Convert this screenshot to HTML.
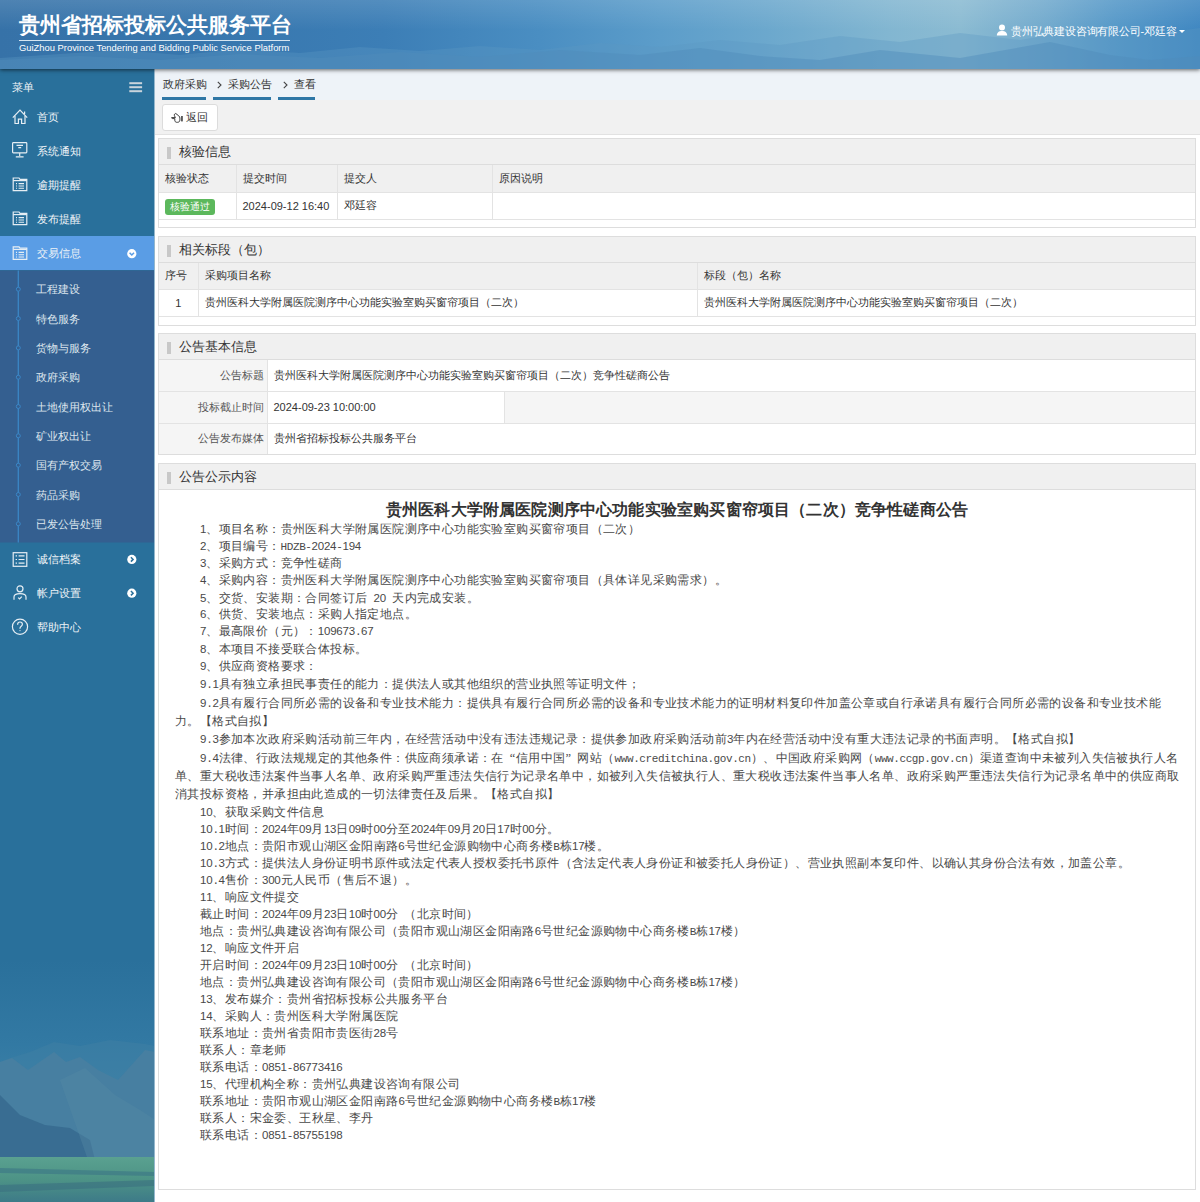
<!DOCTYPE html>
<html><head><meta charset="utf-8">
<style>
*{box-sizing:border-box;margin:0;padding:0}
html,body{width:1200px;height:1202px;overflow:hidden;background:#fff}
body{position:relative;font-family:"Liberation Sans",sans-serif;color:#333;font-size:11px}
.abs{position:absolute}
#hdr{left:0;top:0;width:1200px;height:69px;overflow:hidden;background:linear-gradient(90deg,#3672a8 0%,#3877ae 18%,#3c7eb6 32%,#4a8ec2 45%,#5c9dca 55%,#6ca8cd 64%,#82b6d1 74%,#8bbbd2 80%,#72aacd 87%,#5598c8 93%,#3f87c1 100%);box-shadow:0 1px 4px rgba(0,0,0,.6);z-index:5}
#side{left:0;top:69px;width:154px;box-shadow:1px 0 0 rgba(41,112,155,0.5);height:1133px;background:#29709b;overflow:hidden}
#crumb{left:155px;top:69px;width:1045px;height:31px;background:#eef3f8}
#tool{left:155px;top:100px;width:1045px;height:35px;background:#f1f1f1;border-bottom:1px solid #e2e2e2}
.panel{position:absolute;left:158px;width:1038px;border:1px solid #ddd;background:#fff;overflow:hidden}
.ph{height:26px;background:#f0f0f0;border-bottom:1px solid #ddd;position:relative;font-size:13px;line-height:26px;padding-left:20px;color:#333}
.ph:before{content:"";position:absolute;left:8px;top:8px;width:4px;height:12px;background:#c8c8c8}
table{border-collapse:collapse;width:100%}
td,th{border:1px solid #e3e3e3;font-weight:normal;text-align:left;height:27px;padding:0 6px;font-size:11px;color:#333;white-space:nowrap}
th{background:#f0f0f0}
.panel table{margin-left:0}
.t3 th{background:#f5f5f5;text-align:right;height:32px;padding-right:3px;color:#555}
.t3 td{height:32px}
.t3 tr:last-child th,.t3 tr:last-child td{border-bottom:0;height:31px}
.t3 tr:first-child th,.t3 tr:first-child td{border-top:0;height:31px}
.t1 tr:first-child th,.t2 tr:first-child th{border-top:0}
.t2 tr:first-child th{height:26px}
.panel td:first-child,.panel th:first-child{border-left:0}
.panel td:last-child,.panel th:last-child{border-right:0}
.badge{display:inline-block;position:relative;top:1px;background:#5cb85c;color:#fff;border-radius:3px;height:16px;line-height:16px;padding:0 5px;font-size:10px}
.ln{position:absolute;white-space:nowrap;font-family:"Liberation Serif",serif;font-size:12.4px;letter-spacing:0.4px;text-spacing-trim:space-all;line-height:16px;height:16px;color:#484848}
.q{display:inline-block;width:12px;font-family:"Liberation Serif",serif}
.ql{text-align:right}
.c{display:inline-block;width:6.2px;text-align:center;letter-spacing:0;font-family:"Liberation Mono",monospace;font-size:11px}
.d{font-family:"Liberation Sans",sans-serif;font-size:11.5px}
.ttl{position:absolute;left:158px;width:1038px;top:500px;text-align:center;font-family:"Liberation Serif",serif;font-weight:bold;font-size:16px;line-height:20px;color:#333;letter-spacing:0.17px}
.sl{position:absolute;font-size:11px;line-height:16px;color:#eef3f7;white-space:nowrap}
.ss{color:#dde6ee}
.bc{position:absolute;top:0;height:31px;border-bottom:3px solid #2e77a6;white-space:nowrap}
.bt{position:absolute;top:7px;font-size:11px;line-height:16px;color:#333}
.bcs{position:absolute;top:1px;font-size:11px;line-height:22px;color:#555}
.btn{background:#fff;border:1px solid #dcdcdc;border-radius:3px}
</style></head><body>
<div id="hdr" class="abs">
 <svg class="abs" style="left:0;top:0" width="1200" height="69">
  <defs>
   <linearGradient id="hg1" x1="0" y1="0" x2="0" y2="1"><stop offset="0" stop-color="#ffffff" stop-opacity="0.12"/><stop offset="1" stop-color="#ffffff" stop-opacity="0"/></linearGradient>
  </defs>
  <path d="M0 58 L60 54 L120 50 L180 55 L240 49 L300 53 L360 47 L420 51 L480 46 L540 50 L600 43 L660 47 L720 40 L780 45 L840 36 L900 42 L960 33 L1020 40 L1080 30 L1140 36 L1200 28 L1200 69 L0 69 Z" fill="#5b97c2" opacity="0.35"/><path d="M0 69 L0 60 L80 56 L160 60 L240 54 L320 58 L400 52 L480 57 L560 50 L640 55 L700 48 L760 56 L820 60 L880 50 L960 58 L1050 42 L1110 55 L1150 60 L1200 56 L1200 69 Z" fill="#4f8cbb" opacity="0.45"/><rect x="0" y="0" width="1200" height="30" fill="url(#hg1)"/>
 </svg>
 <div class="abs" style="left:19px;top:11px;font-size:21px;font-weight:900;color:#fff;line-height:28px;white-space:nowrap">贵州省招标投标公共服务平台</div>
 <div class="abs" style="left:19px;top:40px;width:271px;height:1px;background:#d6e6f2"></div>
 <div class="abs" style="left:19px;top:42px;font-size:9.4px;color:#fff;line-height:12px;white-space:nowrap">GuiZhou Province Tendering and Bidding Public Service Platform</div>
 <svg class="abs" style="left:996px;top:24px" width="12" height="12" viewBox="0 0 12 12"><circle cx="6" cy="3.6" r="3" fill="#fff"/><path d="M0.8 11.5 C1 8.2 3 7 6 7 C9 7 11 8.2 11.2 11.5 Z" fill="#fff"/></svg>
 <div class="abs" style="left:1011px;top:23px;font-size:11px;color:#fff;line-height:16px;white-space:nowrap;letter-spacing:-0.2px">贵州弘典建设咨询有限公司-邓廷容</div>
 <div class="abs" style="left:1179px;top:30px;width:0;height:0;border-left:3px solid transparent;border-right:3px solid transparent;border-top:3.5px solid #fff"></div>
</div>
<div id="side" class="abs">
<svg class="abs" style="left:0;top:0" width="155" height="1133"><defs><linearGradient id="sg" x1="0" y1="0" x2="0" y2="1"><stop offset="0" stop-color="#2a709b"/><stop offset="0.35" stop-color="#3279a3"/><stop offset="0.5" stop-color="#3a7fa6"/><stop offset="1" stop-color="#3a78a0"/></linearGradient><linearGradient id="mg" x1="0" y1="0" x2="0" y2="1"><stop offset="0" stop-color="#4f8aa6"/><stop offset="1" stop-color="#3b6f83"/></linearGradient><linearGradient id="fg" x1="0" y1="0" x2="0" y2="1"><stop offset="0" stop-color="#5aa190"/><stop offset="0.5" stop-color="#4d9386"/><stop offset="1" stop-color="#3d7a88"/></linearGradient></defs><rect x="0" y="167" width="155" height="34" fill="#5a9de5"/><rect x="0" y="201.5" width="155" height="272" fill="#345f90"/><rect x="0" y="891" width="155" height="242" fill="url(#sg)"/><path d="M0 993 L10 989 L30 983 L54 973 L80 977 L110 971 L145 975 L155 977 L155 1133 L0 1133 Z" fill="#3f7fa3" opacity="0.5"/><path d="M0 993 L12 989 L28 1001 L54 983 L66 993 L80 988 L98 1001 L118 1011 L145 981 L155 983 L155 1133 L0 1133 Z" fill="#477fa1"/><path d="M0 1026 L20 1046 L45 1056 L70 1059 L90 1071 L95 1091 L0 1091 Z" fill="#36698f" opacity="0.8"/><path d="M60 1011 L85 999 L115 1026 L140 1041 L155 1051 L155 1091 L88 1091 Z" fill="#5689a5" opacity="0.4"/><rect x="0" y="1088" width="155" height="45" fill="url(#fg)"/><path d="M0 1099 L155 1103 L155 1107 L0 1104 Z" fill="#3a7585" opacity="0.6"/><path d="M0 1116 L155 1111 L155 1117 L0 1123 Z" fill="#3a6f80" opacity="0.6"/><line x1="18.3" y1="201.5" x2="18.3" y2="473.5" stroke="#3b86c6" stroke-width="1.3"/>
<g transform="translate(0,40.0)" fill="none" stroke="#e6eef4" stroke-width="1.2"><path d="M12.8 8.6 L20 1.2 L27.2 8.6"/><path d="M15 6.8 V14.5 H18.4 V10.2 H21.6 V14.5 H25 V6.8"/><path d="M24.6 2.4 V5"/></g>
<g transform="translate(0,73.0)" fill="none" stroke="#e6eef4" stroke-width="1.2"><rect x="12.6" y="0.6" width="14.2" height="10.2" rx="0.8"/><path d="M16.5 3.4 H23 M18.3 5.6 H21.2 M19.7 11 V14 M15.8 14.8 H23.6"/></g>
<g transform="translate(0,108.0)" fill="none" stroke="#e6eef4" stroke-width="1.2"><path d="M13.2 3 V1 H19 L20 2.4 H26.8 V13.6 H13.2 Z"/><path d="M13.2 3.6 H26.8"/><path d="M16 6.6 H17 M18.6 6.6 H24 M16 9 H17 M18.6 9 H24 M16 11.2 H17 M18.6 11.2 H24" stroke-width="1.1"/></g>
<g transform="translate(0,142.0)" fill="none" stroke="#e6eef4" stroke-width="1.2"><path d="M13.2 3 V1 H19 L20 2.4 H26.8 V13.6 H13.2 Z"/><path d="M13.2 3.6 H26.8"/><path d="M16 6.6 H17 M18.6 6.6 H24 M16 9 H17 M18.6 9 H24 M16 11.2 H17 M18.6 11.2 H24" stroke-width="1.1"/></g>
<g transform="translate(0,176.8)" fill="none" stroke="#e6eef4" stroke-width="1.2"><path d="M13.2 3 V1 H19 L20 2.4 H26.8 V13.6 H13.2 Z"/><path d="M13.2 3.6 H26.8"/><path d="M16 6.6 H17 M18.6 6.6 H24 M16 9 H17 M18.6 9 H24 M16 11.2 H17 M18.6 11.2 H24" stroke-width="1.1"/></g>
<g transform="translate(0,482.9)" fill="none" stroke="#e6eef4" stroke-width="1.2"><rect x="13.2" y="0.8" width="13.6" height="13.6"/><path d="M15.6 4 H17 M18.6 4 H24.5 M15.6 7.6 H17 M18.6 7.6 H24.5 M15.6 11.2 H17 M18.6 11.2 H24.5" stroke-width="1.1"/></g>
<g transform="translate(0,516.2)" fill="none" stroke="#e6eef4" stroke-width="1.2"><circle cx="20" cy="3.6" r="3"/><path d="M14 14.5 V11.8 C14 9.5 16 8.4 20 8.4 C24 8.4 26 9.5 26 11.8 V14.5"/><path d="M18.2 12.4 L19.6 13.8 L21.8 11.4"/></g>
<g transform="translate(0,557.8)" fill="none" stroke="#e6eef4" stroke-width="1.2"><circle cx="20" cy="0" r="7.6"/><path d="M17.6 -2 C17.6 -4 18.6 -4.8 20 -4.8 C21.5 -4.8 22.4 -3.9 22.4 -2.5 C22.4 -0.6 20 -0.6 20 1.4 V2"/><circle cx="20" cy="3.8" r="0.6" fill="#e6eef4" stroke="none"/></g>
<g transform="translate(131.8,184.7)"><circle r="4.6" fill="#fff"/><path d="M-2.2 -0.9 L0 1.3 L2.2 -0.9" fill="none" stroke="#5a9de5" stroke-width="1.5"/></g>
<g transform="translate(131.8,490.4)"><circle r="4.6" fill="#fff"/><path d="M-0.9 -2.2 L1.3 0 L-0.9 2.2" fill="none" stroke="#2a709b" stroke-width="1.5"/></g>
<g transform="translate(131.8,524.2)"><circle r="4.6" fill="#fff"/><path d="M-0.9 -2.2 L1.3 0 L-0.9 2.2" fill="none" stroke="#2a709b" stroke-width="1.5"/></g>
<circle cx="18.3" cy="220.2" r="2" fill="#345f90" stroke="#3b86c6" stroke-width="1"/>
<circle cx="18.3" cy="249.5" r="2" fill="#345f90" stroke="#3b86c6" stroke-width="1"/>
<circle cx="18.3" cy="278.9" r="2" fill="#345f90" stroke="#3b86c6" stroke-width="1"/>
<circle cx="18.3" cy="308.2" r="2" fill="#345f90" stroke="#3b86c6" stroke-width="1"/>
<circle cx="18.3" cy="337.5" r="2" fill="#345f90" stroke="#3b86c6" stroke-width="1"/>
<circle cx="18.3" cy="366.8" r="2" fill="#345f90" stroke="#3b86c6" stroke-width="1"/>
<circle cx="18.3" cy="396.2" r="2" fill="#345f90" stroke="#3b86c6" stroke-width="1"/>
<circle cx="18.3" cy="425.5" r="2" fill="#345f90" stroke="#3b86c6" stroke-width="1"/>
<circle cx="18.3" cy="454.8" r="2" fill="#345f90" stroke="#3b86c6" stroke-width="1"/>
<g fill="#c9d4dc"><rect x="129.3" y="13.2" width="12.8" height="2"/><rect x="129.3" y="17.2" width="12.8" height="2"/><rect x="129.3" y="21.2" width="12.8" height="2"/></g>
</svg>
<div class="sl" style="left:11.5px;top:9.5px">菜单</div>
<div class="sl" style="left:36.5px;top:39.5px">首页</div>
<div class="sl" style="left:36.5px;top:73.5px">系统通知</div>
<div class="sl" style="left:36.5px;top:107.5px">逾期提醒</div>
<div class="sl" style="left:36.5px;top:141.5px">发布提醒</div>
<div class="sl" style="left:36.5px;top:176.3px">交易信息</div>
<div class="sl" style="left:36.5px;top:482.4px">诚信档案</div>
<div class="sl" style="left:36.5px;top:516.2px">帐户设置</div>
<div class="sl" style="left:36.5px;top:549.8px">帮助中心</div>
<div class="sl ss" style="left:35.8px;top:212.2px">工程建设</div>
<div class="sl ss" style="left:35.8px;top:241.5px">特色服务</div>
<div class="sl ss" style="left:35.8px;top:270.9px">货物与服务</div>
<div class="sl ss" style="left:35.8px;top:300.2px">政府采购</div>
<div class="sl ss" style="left:35.8px;top:329.5px">土地使用权出让</div>
<div class="sl ss" style="left:35.8px;top:358.8px">矿业权出让</div>
<div class="sl ss" style="left:35.8px;top:388.2px">国有产权交易</div>
<div class="sl ss" style="left:35.8px;top:417.5px">药品采购</div>
<div class="sl ss" style="left:35.8px;top:446.8px">已发公告处理</div>
</div>
<div id="crumb" class="abs">
 <div class="bc" style="left:7px;width:44px"><span class="bt" style="left:0.5px">政府采购</span></div>
 <div class="bc" style="left:57.7px;width:58.5px"><svg class="abs" style="left:4px;top:12px" width="5" height="8" viewBox="0 0 5 8"><path d="M0.8 0.8 L4 4 L0.8 7.2" fill="none" stroke="#444" stroke-width="1.1"/></svg><span class="bt" style="left:15px">采购公告</span></div>
 <div class="bc" style="left:123px;width:37.4px"><svg class="abs" style="left:4.5px;top:12px" width="5" height="8" viewBox="0 0 5 8"><path d="M0.8 0.8 L4 4 L0.8 7.2" fill="none" stroke="#444" stroke-width="1.1"/></svg><span class="bt" style="left:15.5px">查看</span></div>
</div>
</div>
<div id="tool" class="abs">
 <div class="abs btn" style="left:7px;top:4px;width:56px;height:27px">
  <svg class="abs" style="left:8px;top:6.5px" width="13" height="12" viewBox="0 0 13 12"><path d="M0.6 5.6 H4.4 L3.4 3.6 C3 2.6 3.9 1.2 4.9 1.6 L7.8 3.9 C8.5 4.5 8.9 5.2 8.9 6.1 V7.9 C8.9 9.3 8 10.3 6.6 10.3 H5.7 C4.5 10.3 3.8 9.4 3.8 8.2 V6.6 H1.6 C1 6.6 0.6 6.2 0.6 5.6 Z" fill="none" stroke="#3a3a3a" stroke-width="1" stroke-linejoin="round"/><rect x="10.2" y="4" width="1.5" height="5.4" fill="#333"/></svg>
  <div class="abs" style="left:23px;top:4px;font-size:11px;line-height:16px;color:#333">返回</div>
 </div>
</div>
<div class="panel" style="top:138px;height:90px">
 <div class="ph">核验信息</div>
 <table class="t1"><colgroup><col style="width:77px"><col style="width:101px"><col style="width:155px"><col></colgroup>
 <tr><th>核验状态</th><th>提交时间</th><th>提交人</th><th>原因说明</th></tr>
 <tr><td><span class="badge">核验通过</span></td><td>2024-09-12 16:40</td><td>邓廷容</td><td></td></tr>
 </table>
</div>
<div class="panel" style="top:236px;height:90px">
 <div class="ph" style="height:26px">相关标段（包）</div>
 <table class="t2"><colgroup><col style="width:39px"><col style="width:499px"><col></colgroup>
 <tr><th>序号</th><th>采购项目名称</th><th>标段（包）名称</th></tr>
 <tr><td style="text-align:center">1</td><td>贵州医科大学附属医院测序中心功能实验室购买窗帘项目（二次）</td><td>贵州医科大学附属医院测序中心功能实验室购买窗帘项目（二次）</td></tr>
 </table>
</div>
<div class="panel" style="top:333px;height:122px">
 <div class="ph">公告基本信息</div>
 <table class="t3"><colgroup><col style="width:108px"><col style="width:237px"><col></colgroup>
 <tr><th>公告标题</th><td colspan="2">贵州医科大学附属医院测序中心功能实验室购买窗帘项目（二次）竞争性磋商公告</td></tr>
 <tr><th>投标截止时间</th><td>2024-09-23 10:00:00</td><th></th></tr>
 <tr><th>公告发布媒体</th><td colspan="2">贵州省招标投标公共服务平台</td></tr>
 </table>
</div>
<div class="panel" style="top:463px;height:727px">
 <div class="ph">公告公示内容</div>
</div>
<div class="ttl">贵州医科大学附属医院测序中心功能实验室购买窗帘项目（二次）竞争性磋商公告</div>
<div class="ln" style="top:521.4px;left:200px"><span class="c d">1</span>、项目名称：贵州医科大学附属医院测序中心功能实验室购买窗帘项目（二次）</div>
<div class="ln" style="top:538.2px;left:200px"><span class="c d">2</span>、项目编号：<span class="c">H</span><span class="c">D</span><span class="c">Z</span><span class="c">B</span><span class="c">-</span><span class="c d">2</span><span class="c d">0</span><span class="c d">2</span><span class="c d">4</span><span class="c">-</span><span class="c d">1</span><span class="c d">9</span><span class="c d">4</span></div>
<div class="ln" style="top:555.1px;left:200px"><span class="c d">3</span>、采购方式：竞争性磋商</div>
<div class="ln" style="top:572.0px;left:200px"><span class="c d">4</span>、采购内容：贵州医科大学附属医院测序中心功能实验室购买窗帘项目（具体详见采购需求）。</div>
<div class="ln" style="top:589.5px;left:200px"><span class="c d">5</span>、交货、安装期：合同签订后<span class="c">&nbsp;</span><span class="c d">2</span><span class="c d">0</span><span class="c">&nbsp;</span>天内完成安装。</div>
<div class="ln" style="top:606.4px;left:200px"><span class="c d">6</span>、供货、安装地点：采购人指定地点。</div>
<div class="ln" style="top:623.2px;left:200px"><span class="c d">7</span>、最高限价（元）：<span class="c d">1</span><span class="c d">0</span><span class="c d">9</span><span class="c d">6</span><span class="c d">7</span><span class="c d">3</span><span class="c">.</span><span class="c d">6</span><span class="c d">7</span></div>
<div class="ln" style="top:640.5px;left:200px"><span class="c d">8</span>、本项目不接受联合体投标。</div>
<div class="ln" style="top:657.8px;left:200px"><span class="c d">9</span>、供应商资格要求：</div>
<div class="ln" style="top:676.2px;left:200px"><span class="c d">9</span><span class="c">.</span><span class="c d">1</span>具有独立承担民事责任的能力：提供法人或其他组织的营业执照等证明文件；</div>
<div class="ln" style="top:694.5px;left:200px"><span class="c d">9</span><span class="c">.</span><span class="c d">2</span>具有履行合同所必需的设备和专业技术能力：提供具有履行合同所必需的设备和专业技术能力的证明材料复印件加盖公章或自行承诺具有履行合同所必需的设备和专业技术能</div>
<div class="ln" style="top:712.8px;left:175px">力。【格式自拟】</div>
<div class="ln" style="top:731.2px;left:200px"><span class="c d">9</span><span class="c">.</span><span class="c d">3</span>参加本次政府采购活动前三年内，在经营活动中没有违法违规记录：提供参加政府采购活动前<span class="c d">3</span>年内在经营活动中没有重大违法记录的书面声明。【格式自拟】</div>
<div class="ln" style="top:749.5px;left:200px"><span class="c d">9</span><span class="c">.</span><span class="c d">4</span>法律、行政法规规定的其他条件：供应商须承诺：在<span class="q ql">“</span>信用中国<span class="q qr">”</span>网站（<span class="c">w</span><span class="c">w</span><span class="c">w</span><span class="c">.</span><span class="c">c</span><span class="c">r</span><span class="c">e</span><span class="c">d</span><span class="c">i</span><span class="c">t</span><span class="c">c</span><span class="c">h</span><span class="c">i</span><span class="c">n</span><span class="c">a</span><span class="c">.</span><span class="c">g</span><span class="c">o</span><span class="c">v</span><span class="c">.</span><span class="c">c</span><span class="c">n</span>）、中国政府采购网（<span class="c">w</span><span class="c">w</span><span class="c">w</span><span class="c">.</span><span class="c">c</span><span class="c">c</span><span class="c">g</span><span class="c">p</span><span class="c">.</span><span class="c">g</span><span class="c">o</span><span class="c">v</span><span class="c">.</span><span class="c">c</span><span class="c">n</span>）渠道查询中未被列入失信被执行人名</div>
<div class="ln" style="top:767.8px;left:175px">单、重大税收违法案件当事人名单、政府采购严重违法失信行为记录名单中，如被列入失信被执行人、重大税收违法案件当事人名单、政府采购严重违法失信行为记录名单中的供应商取</div>
<div class="ln" style="top:786.2px;left:175px">消其投标资格，并承担由此造成的一切法律责任及后果。【格式自拟】</div>
<div class="ln" style="top:803.9px;left:200px"><span class="c d">1</span><span class="c d">0</span>、获取采购文件信息</div>
<div class="ln" style="top:820.9px;left:200px"><span class="c d">1</span><span class="c d">0</span><span class="c">.</span><span class="c d">1</span>时间：<span class="c d">2</span><span class="c d">0</span><span class="c d">2</span><span class="c d">4</span>年<span class="c d">0</span><span class="c d">9</span>月<span class="c d">1</span><span class="c d">3</span>日<span class="c d">0</span><span class="c d">9</span>时<span class="c d">0</span><span class="c d">0</span>分至<span class="c d">2</span><span class="c d">0</span><span class="c d">2</span><span class="c d">4</span>年<span class="c d">0</span><span class="c d">9</span>月<span class="c d">2</span><span class="c d">0</span>日<span class="c d">1</span><span class="c d">7</span>时<span class="c d">0</span><span class="c d">0</span>分。</div>
<div class="ln" style="top:837.9px;left:200px"><span class="c d">1</span><span class="c d">0</span><span class="c">.</span><span class="c d">2</span>地点：贵阳市观山湖区金阳南路<span class="c d">6</span>号世纪金源购物中心商务楼<span class="c">B</span>栋<span class="c d">1</span><span class="c d">7</span>楼。</div>
<div class="ln" style="top:854.9px;left:200px"><span class="c d">1</span><span class="c d">0</span><span class="c">.</span><span class="c d">3</span>方式：提供法人身份证明书原件或法定代表人授权委托书原件（含法定代表人身份证和被委托人身份证）、营业执照副本复印件、以确认其身份合法有效，加盖公章。</div>
<div class="ln" style="top:871.9px;left:200px"><span class="c d">1</span><span class="c d">0</span><span class="c">.</span><span class="c d">4</span>售价：<span class="c d">3</span><span class="c d">0</span><span class="c d">0</span>元人民币（售后不退）。</div>
<div class="ln" style="top:888.9px;left:200px"><span class="c d">1</span><span class="c d">1</span>、响应文件提交</div>
<div class="ln" style="top:905.9px;left:200px">截止时间：<span class="c d">2</span><span class="c d">0</span><span class="c d">2</span><span class="c d">4</span>年<span class="c d">0</span><span class="c d">9</span>月<span class="c d">2</span><span class="c d">3</span>日<span class="c d">1</span><span class="c d">0</span>时<span class="c d">0</span><span class="c d">0</span>分<span class="c">&nbsp;</span>（北京时间）</div>
<div class="ln" style="top:922.9px;left:200px">地点：贵州弘典建设咨询有限公司（贵阳市观山湖区金阳南路<span class="c d">6</span>号世纪金源购物中心商务楼<span class="c">B</span>栋<span class="c d">1</span><span class="c d">7</span>楼）</div>
<div class="ln" style="top:939.9px;left:200px"><span class="c d">1</span><span class="c d">2</span>、响应文件开启</div>
<div class="ln" style="top:956.9px;left:200px">开启时间：<span class="c d">2</span><span class="c d">0</span><span class="c d">2</span><span class="c d">4</span>年<span class="c d">0</span><span class="c d">9</span>月<span class="c d">2</span><span class="c d">3</span>日<span class="c d">1</span><span class="c d">0</span>时<span class="c d">0</span><span class="c d">0</span>分<span class="c">&nbsp;</span>（北京时间）</div>
<div class="ln" style="top:973.9px;left:200px">地点：贵州弘典建设咨询有限公司（贵阳市观山湖区金阳南路<span class="c d">6</span>号世纪金源购物中心商务楼<span class="c">B</span>栋<span class="c d">1</span><span class="c d">7</span>楼）</div>
<div class="ln" style="top:990.9px;left:200px"><span class="c d">1</span><span class="c d">3</span>、发布媒介：贵州省招标投标公共服务平台</div>
<div class="ln" style="top:1007.9px;left:200px"><span class="c d">1</span><span class="c d">4</span>、采购人：贵州医科大学附属医院</div>
<div class="ln" style="top:1024.9px;left:200px">联系地址：贵州省贵阳市贵医街<span class="c d">2</span><span class="c d">8</span>号</div>
<div class="ln" style="top:1041.9px;left:200px">联系人：章老师</div>
<div class="ln" style="top:1058.9px;left:200px">联系电话：<span class="c d">0</span><span class="c d">8</span><span class="c d">5</span><span class="c d">1</span><span class="c">-</span><span class="c d">8</span><span class="c d">6</span><span class="c d">7</span><span class="c d">7</span><span class="c d">3</span><span class="c d">4</span><span class="c d">1</span><span class="c d">6</span></div>
<div class="ln" style="top:1075.9px;left:200px"><span class="c d">1</span><span class="c d">5</span>、代理机构全称：贵州弘典建设咨询有限公司</div>
<div class="ln" style="top:1092.9px;left:200px">联系地址：贵阳市观山湖区金阳南路<span class="c d">6</span>号世纪金源购物中心商务楼<span class="c">B</span>栋<span class="c d">1</span><span class="c d">7</span>楼</div>
<div class="ln" style="top:1109.9px;left:200px">联系人：宋金委、王秋星、李丹</div>
<div class="ln" style="top:1126.9px;left:200px">联系电话：<span class="c d">0</span><span class="c d">8</span><span class="c d">5</span><span class="c d">1</span><span class="c">-</span><span class="c d">8</span><span class="c d">5</span><span class="c d">7</span><span class="c d">5</span><span class="c d">5</span><span class="c d">1</span><span class="c d">9</span><span class="c d">8</span></div>
</body></html>
